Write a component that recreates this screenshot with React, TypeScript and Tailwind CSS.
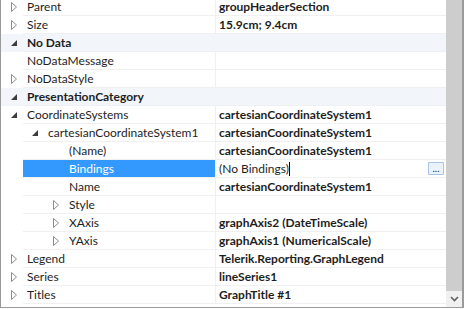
type Row = {
  name: string;
  value?: string;
  level?: number;
  kind?: "closed" | "open" | "none";
  category?: boolean;
  selected?: boolean;
  plain?: boolean;
};

const rows: Row[] = [
  { name: "Parent", value: "groupHeaderSection", kind: "closed" },
  { name: "Size", value: "15.9cm; 9.4cm", kind: "closed" },
  { name: "No Data", category: true, kind: "open" },
  { name: "NoDataMessage", kind: "none" },
  { name: "NoDataStyle", kind: "closed" },
  { name: "PresentationCategory", category: true, kind: "open" },
  { name: "CoordinateSystems", value: "cartesianCoordinateSystem1", kind: "open" },
  { name: "cartesianCoordinateSystem1", value: "cartesianCoordinateSystem1", level: 1, kind: "open" },
  { name: "(Name)", value: "cartesianCoordinateSystem1", level: 2, kind: "none" },
  { name: "Bindings", value: "(No Bindings)", level: 2, kind: "none", selected: true, plain: true },
  { name: "Name", value: "cartesianCoordinateSystem1", level: 2, kind: "none" },
  { name: "Style", level: 2, kind: "closed" },
  { name: "XAxis", value: "graphAxis2 (DateTimeScale)", level: 2, kind: "closed" },
  { name: "YAxis", value: "graphAxis1 (NumericalScale)", level: 2, kind: "closed" },
  { name: "Legend", value: "Telerik.Reporting.GraphLegend", kind: "closed" },
  { name: "Series", value: "lineSeries1", kind: "closed" },
  { name: "Titles", value: "GraphTitle #1", kind: "closed" },
];

const Glyph = ({ kind }: { kind?: Row["kind"] }) => {
  if (kind === "closed")
    return (
      <svg width="7" height="10" viewBox="0 0 7 10">
        <path d="M0.5 0.5 L5.5 5 L0.5 9.5 Z" fill="none" stroke="#8c8c8c" strokeWidth="1" />
      </svg>
    );
  if (kind === "open")
    return (
      <svg width="6" height="6" viewBox="0 0 6 6">
        <path d="M6 0 L6 6 L0 6 Z" fill="#3c3c3c" />
      </svg>
    );
  return null;
};

const PropRow = ({ row }: { row: Row }) => {
  const level = row.level ?? 0;
  const rowBg = row.category ? "bg-[#f2f5fa]" : "bg-white";
  return (
    <div className={`flex h-[18px] ${rowBg}`}>
      <div className="w-[22px] flex items-center pl-[10px]">
        {level === 0 && <Glyph kind={row.kind} />}
      </div>
      {row.category ? (
        <div className="flex-1 flex items-center pl-[4px] font-bold border-b border-[#eef0f3]">
          {row.name}
        </div>
      ) : (
        <>
          <div
            className={`w-[192px] flex items-center border-b border-[#f0f0f0] ${
              row.selected ? "bg-[#3399ff] text-white border-[#3399ff]" : ""
            }`}
          >
            {level === 0 ? (
              <span className="pl-[4px]">{row.name}</span>
            ) : (
              <>
                <div style={{ width: 21 * level - 12 }} />
                <div className="w-[16px] flex items-center">
                  <Glyph kind={row.kind} />
                </div>
                <span>{row.name}</span>
              </>
            )}
          </div>
          <div className="flex-1 flex items-center border-b border-l border-[#f0f0f0] pl-[3px] pr-[2px]">
            {row.value && (
              <span className={row.plain ? "" : "font-bold"}>{row.value}</span>
            )}
            {row.selected && (
              <>
                <span className="w-px h-[14px] bg-black" />
                <div className="ml-auto w-[16px] h-[13px] border border-[#a8c4e4] bg-[#eaf2fb] rounded-[1px] flex items-end justify-center text-[10px] leading-[9px] pb-[1px]">
                  ...
                </div>
              </>
            )}
          </div>
        </>
      )}
    </div>
  );
};

export default function App() {
  return (
    <div
      className="w-[464px] h-[309px] bg-white text-[#1e1e1e] text-[12px] leading-none overflow-hidden"
      style={{ fontFamily: "Lato, 'Liberation Sans', sans-serif" }}
    >
      <div className="flex h-[308px] border-l border-b border-[#9a9a9a] border-r-2">
        <div className="flex-1 overflow-hidden">
          <div className="-mt-[2px]">
            {rows.map((r, i) => (
              <PropRow key={i} row={r} />
            ))}
          </div>
        </div>
        <div className="w-[16px] flex flex-col">
          <div className="flex-1 bg-[#cdcdcd]" />
          <div className="h-[16px] bg-[#f0f0f0] flex items-center justify-center">
            <svg width="9" height="6" viewBox="0 0 9 6">
              <path d="M1 1 L4.5 4.5 L8 1" fill="none" stroke="#606060" strokeWidth="1.6" />
            </svg>
          </div>
        </div>
      </div>
    </div>
  );
}
